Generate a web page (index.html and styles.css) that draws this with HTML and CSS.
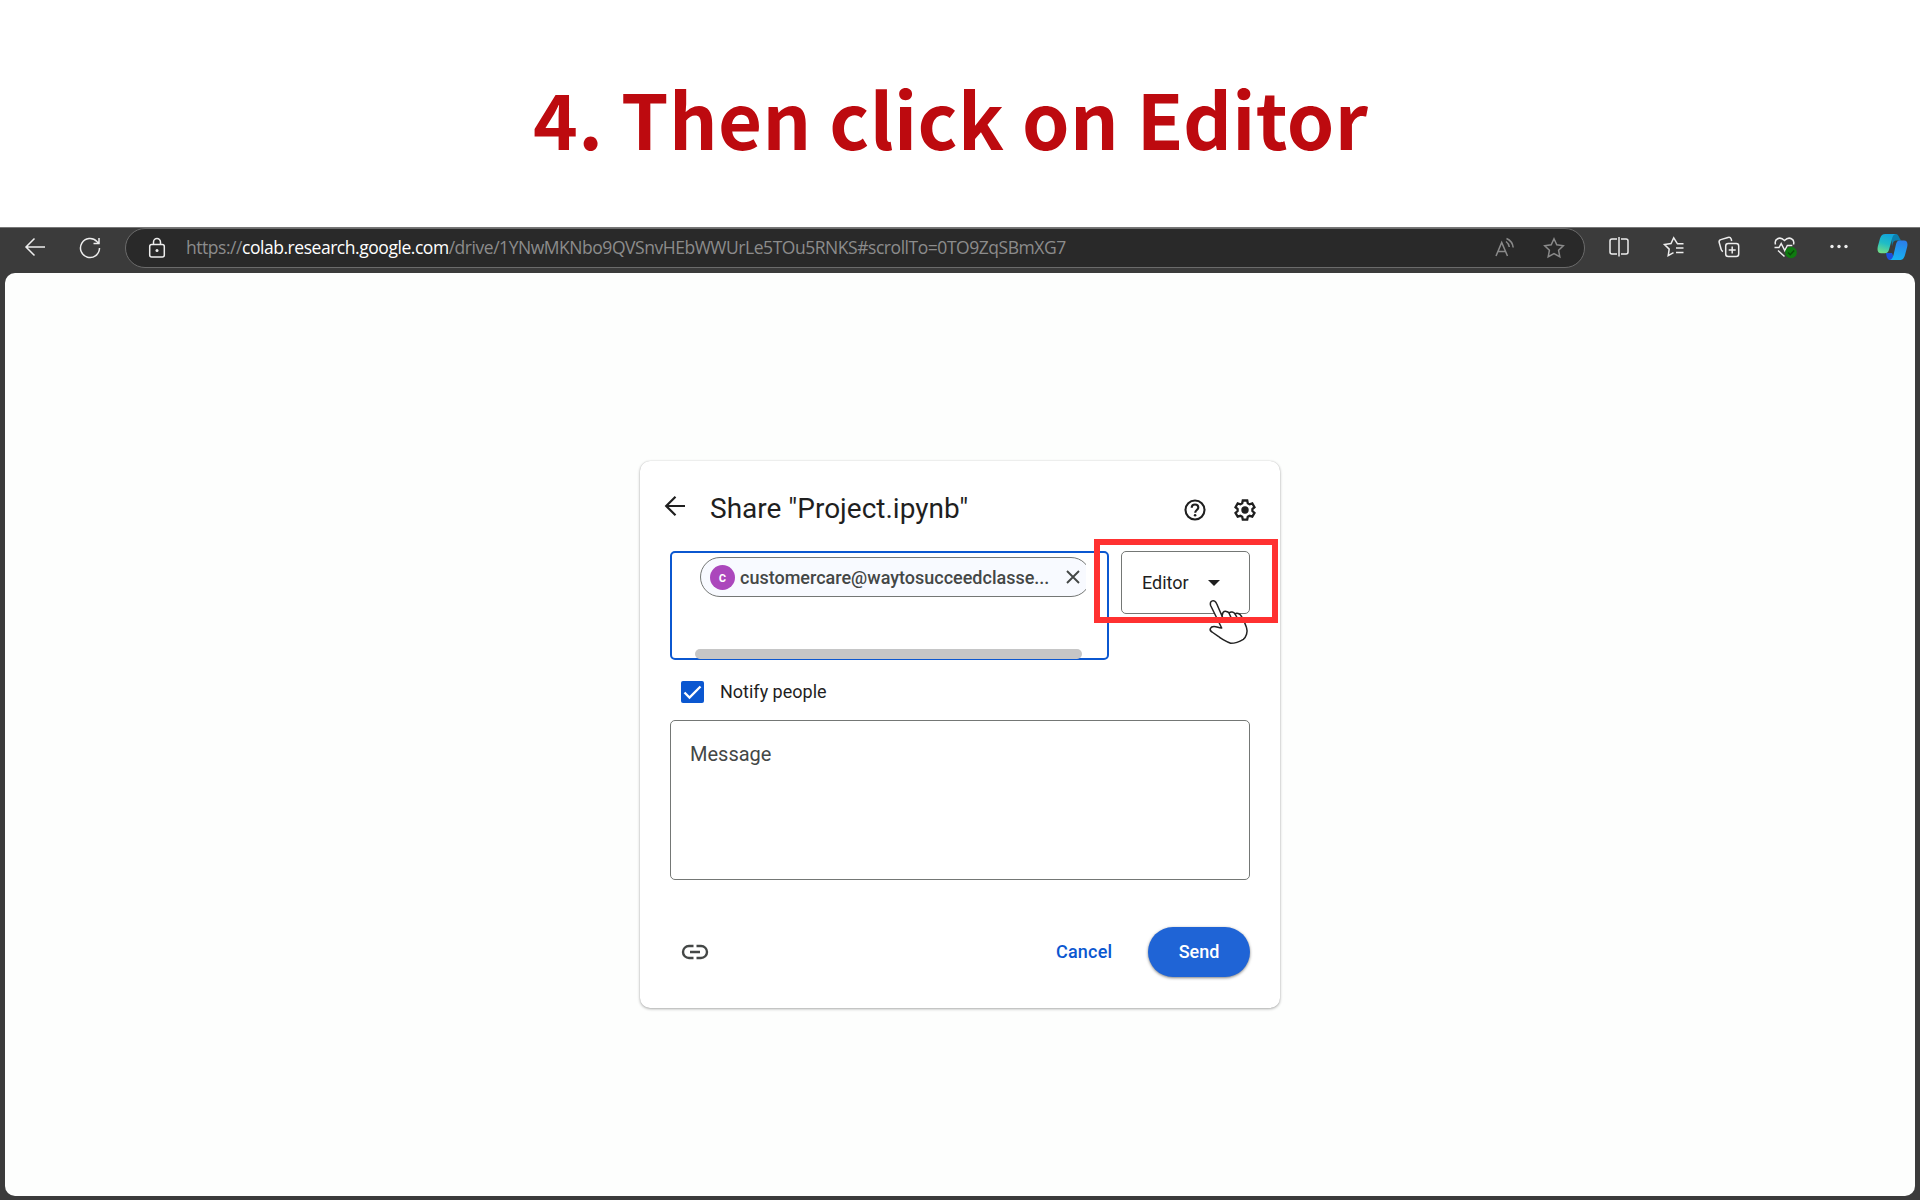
FILE: index.html
```html
<!DOCTYPE html>
<html lang="en">
<head>
<meta charset="utf-8">
<title>Then click on Editor</title>
<link rel="stylesheet" href="styles.css">
</head>
<body>
<header class="heading"><h1>4. Then click on Editor</h1></header>
<main class="browser">
  <nav class="toolbar">
    <svg class="nav-back" width="24" height="24" viewBox="0 0 24 24"><path d="M22 12H3M11.500 3.500 3 12l8.500 8.500"/></svg>
    <svg class="nav-reload" width="24" height="24" viewBox="0 0 24 24"><path d="M21.500 12a9.500 9.500 0 1 1-2.600-6.500L21 7.500M21 2v5.500h-5.500"/></svg>
    <div class="address">
      <svg class="lock" width="18" height="22" viewBox="0 0 18 22"><rect x="1.700" y="7.500" width="14.600" height="12.500" rx="2"/><path d="M5.500 7.500V5a3.500 3.500 0 0 1 7 0v2.500"/><circle class="fill" cx="9" cy="13.500" r="1.500"/></svg>
      <div class="url"><span class="scheme">https://</span><span class="host">colab.research.google.com</span><span class="path">/drive/1YNwMKNbo9QVSnvHEbWWUrLe5TOu5RNKS#scrollTo=0TO9ZqSBmXG7</span></div>
      <svg class="read" width="22" height="22" viewBox="0 0 22 22"><path d="M2 19 7.700 5.500 13.500 19M4 14.500h7.500M12 4.500c2 1.500 3 3.200 3.300 5.500M12.500 1.500c4 1.700 6.200 4.700 6.700 9"/></svg>
      <svg class="star" width="22" height="22" viewBox="0 0 22 22"><path d="m11 1.800 2.800 6 6.500.9-4.700 4.600 1.200 6.500-5.800-3.100-5.800 3.100 1.200-6.500-4.700-4.600 6.500-.9z"/></svg>
    </div>
    <div class="actions">
      <svg width="22" height="22" viewBox="0 0 22 22"><path d="M9 3H4a2 2 0 0 0-2 2v11a2 2 0 0 0 2 2h5M13 3h5a2 2 0 0 1 2 2v11a2 2 0 0 1-2 2h-5M11 1v19.500"/></svg>
      <svg width="22" height="22" viewBox="0 0 22 22"><path d="M20.500 7.800h-6L10.700 1.800 8 7.600l-6.500.9 4.700 4.600L5.200 19.600l5.300-2.900M13 12.100h7.500M13 16.400h7.500"/></svg>
      <svg width="22" height="22" viewBox="0 0 22 22"><rect x="7.700" y="7.500" width="13" height="13" rx="2.500"/><path d="M14.200 10.500v7M10.700 14h7M5 15.500c-1-.3-1.500-1-1.800-2L1.200 6.500c-.4-1.400.2-2.400 1.600-2.900L10 1.500c1.500-.4 2.600.1 3.200 1.500l.5 2"/></svg>
      <svg width="24" height="22" viewBox="0 0 24 22"><path d="M2.500 8.500C1 3.500 6.500-.5 11.500 4.500 16.500-.5 22 3.500 20.500 8.500M1.500 11.500H6l2.200-4 3.600 7 2.500-5h5M5 14.500l6.500 6"/><circle cx="18" cy="16.500" r="5.800" class="badge"/><path class="badge-tick" d="m15 16.500 2.200 2.200 4-4.300"/></svg>
      <svg class="dots" width="18" height="22" viewBox="0 0 18 22"><circle cx="2" cy="10.500" r="1.700"/><circle cx="9" cy="10.500" r="1.700"/><circle cx="16" cy="10.500" r="1.700"/></svg>
      <svg class="copilot" width="31" height="28" viewBox="0 0 31 28">
        <defs>
          <linearGradient id="leaf" x1=".6" y1="0" x2=".3" y2="1"><stop offset="0" stop-color="#12a4dc"/><stop offset=".5" stop-color="#20bdc5"/><stop offset="1" stop-color="#70dc87"/></linearGradient>
          <linearGradient id="wave" x1=".6" y1="0" x2=".4" y2="1"><stop offset="0" stop-color="#2b7eea"/><stop offset="1" stop-color="#16b4f2"/></linearGradient>
        </defs>
        <path fill="#0c7fae" d="M14 1h5c3 0 3.500 6.500 6 6.500h-6c-3 0-3.500 4-4 6z"/>
        <path fill="#1c50dc" d="M9 20h6l3 7h-5c-2.500 0-3.500-3-4-7z"/>
        <path fill="url(#leaf)" d="M8.500 1H19c-3 .5-3.500 3-4.300 6l-2.500 9c-.8 3-1.800 4.200-4.500 4.200H4C1 20.200 0 17.500.8 13.500L3 5.500C4 2.300 5.500 1 8.500 1z"/>
        <path fill="url(#wave)" d="M22.500 7.500h4.500c3 0 4 2.500 3.200 6.300L28 22c-1 3.700-2.700 5-5.500 5H12.500c2.500-.4 3.300-2.400 4-5l2.200-9.500c.8-3.500 1.500-5 3.800-5z"/>
      </svg>
    </div>
  </nav>
  <section class="page">
    <div class="dialog">
      <div class="title-row">
        <svg class="back" width="22" height="22" viewBox="0 0 22 22"><path d="M21 11H2.500M11.500 1.700 2.200 11l9.300 9.300"/></svg>
        <h2>Share "Project.ipynb"</h2>
        <svg class="help" width="22" height="22" viewBox="0 0 22 22"><circle cx="11" cy="11" r="9.500"/><path d="M7.700 8.700C7.700 6.600 9.200 5.500 11 5.500s3.300 1.200 3.300 3c0 2.400-3.100 2.700-3.100 5.300"/><circle class="fill" cx="11.100" cy="16.300" r="1.300"/></svg>
        <svg class="gear" width="24" height="24" viewBox="0 0 24 24"><path d="M9.800 2.500h4.400l.6 2.800 1.800 1 2.700-.9 2.200 3.800-2.100 1.900v1.900l2.100 1.900-2.200 3.800-2.700-.9-1.800 1-.6 2.800H9.800l-.6-2.800-1.800-1-2.700.9-2.200-3.800 2.100-1.900v-1.900L2.500 9.200l2.200-3.800 2.700.9 1.800-1z"/><circle class="fill" cx="12" cy="12" r="3.700"/></svg>
      </div>
      <div class="recipient-row">
        <div class="people">
          <div class="chip-clip"><div class="chip"><span class="avatar">c</span><span class="email">customercare@waytosucceedclasse...</span><svg class="close" width="14" height="14" viewBox="0 0 14 14"><path d="m1 1 12 12M13 1 1 13"/></svg></div></div>
          <div class="scrollbar"></div>
        </div>
        <div class="role"><span class="role-name">Editor</span><svg class="caret" width="14" height="8" viewBox="0 0 14 8"><path d="M1 1h12L7 7z"/></svg>
          <svg class="pointer" width="42" height="48" viewBox="0 0 42 48"><path class="hand" d="M13.700 30 2.600 7.500C1.300 3 6.500.2 8.700 5.700L14 18l1-3.500c1.500-1.800 5-1.300 6 .5 1.800-1.700 4.800-1.200 6 .8 1.700-1 4.800-.5 6.200 2.200 2.500 4 4.300 8 5.300 11.500 1.500 4.500-.3 9.500-3.200 11.800-4 2.500-7 4-12.600 4C18.500 44 12 40 10.300 38.300L4 34c-3.500-2-1.500-5.500 2-5.500 3 0 5 1.700 7.700 1.500z"/><path d="m14 18 1.500 3.500M21 15l2 4.500M27 15.800l2 3.700"/></svg>
          <div class="highlight"></div>
        </div>
      </div>
      <label class="notify"><span class="checkbox"><svg width="23" height="22" viewBox="0 0 23 22"><path d="m3.500 11.500 5 5L19.500 5.500"/></svg></span><span class="notify-text">Notify people</span></label>
      <div class="message"><span>Message</span></div>
      <footer class="footer">
        <svg class="link" width="26" height="16" viewBox="0 0 26 16"><path d="M11.500 2H7a6 6 0 0 0 0 12h4.500M14.500 2H19a6 6 0 0 1 0 12h-4.500M8 8h10"/></svg>
        <span class="cancel">Cancel</span>
        <span class="send">Send</span>
      </footer>
    </div>
  </section>
</main>
</body>
</html>
```
FILE: styles.css
```css
* { box-sizing: border-box; }
body { margin: 0; width: 1920px; height: 1200px; overflow: hidden; background: #fff; font-family: Roboto, sans-serif; color: #1f1f1f; }
svg { display: block; flex: none; fill: none; stroke: currentColor; overflow: visible; }
svg .fill { fill: currentColor; stroke: none; }
.heading { height: 227px; padding-top: 62px; padding-left: 533px; }
h1 { margin: 0; font: 700 76px/110px "Noto Sans CJK SC", sans-serif; letter-spacing: .4px; color: #bd0a0f; white-space: nowrap; }
.browser { height: 973px; background: #3b3b3b; border-top: 1px solid #777; padding: 0 5px 4px; }
.toolbar { height: 45px; display: flex; align-items: flex-start; color: #ededed; stroke-width: 1.5; }
.nav-back { margin: 7px 0 0 18px; }
.nav-reload { margin: 8px 0 0 31px; }
.address { width: 1460px; height: 40px; margin-left: 23px; border: 1px solid #6b6b6b; border-radius: 20px; background: #292929; display: flex; align-items: center; }
.lock { margin-left: 22px; }
.url { width: 1308px; margin-left: 20px; padding-bottom: 1px; font: 17.500px/37px "Open Sans", sans-serif; letter-spacing: -.46px; white-space: nowrap; color: #8c8c8c; }
.host { color: #fff; }
.read, .star { color: #8a8a8a; }
.star { margin-left: 27px; }
.actions { display: flex; margin: 8px 0 0 23px; gap: 33px; }
.actions .dots { fill: currentColor; stroke: none; }
.badge { fill: #0f7b10; stroke: none; }
.badge-tick { stroke: #0a4a0a; }
.copilot { stroke: none; margin: -3px 0 0 -4px; }
.page { height: 923px; background: #fdfefd; border-radius: 10px; padding: 188px 0 0 635px; }
.dialog { width: 640px; height: 547px; border-radius: 10px; background: #fff; box-shadow: 0 1px 3px rgba(0,0,0,.32), 0 0 1px rgba(0,0,0,.2); padding: 0 30px; }
.title-row { height: 90px; display: flex; align-items: flex-start; padding-top: 34px; }
.back { margin: 0 0 0 -6px; stroke-width: 2.200; }
h2 { flex: none; width: 450px; margin: -3px 0 0 24px; font: 400 28px/34px Roboto, sans-serif; white-space: nowrap; }
.help { margin: 4px 0 0 24px; stroke-width: 2.100; }
.gear { margin: 3px 0 0 27px; stroke-width: 2.300; }
.recipient-row { display: flex; gap: 12px; height: 109px; }
.people { width: 439px; height: 109px; border: 2px solid #0b57d0; border-radius: 5px; padding: 4px 21px 0 28px; display: flex; flex-direction: column; justify-content: space-between; }
.chip-clip { overflow: hidden; }
.chip { width: 391px; height: 40px; border: 1px solid #747775; border-radius: 20px; background: #f8faff; display: flex; align-items: center; padding-left: 9px; }
.avatar { width: 25px; height: 25px; border-radius: 50%; background: #ab47bc; color: #fff; font: 500 14px/24px Roboto, sans-serif; text-align: center; }
.email { width: 326px; margin-left: 5px; padding-top: 1px; font: 500 18px/24px Roboto, sans-serif; color: #444746; white-space: nowrap; }
.close { color: #444746; stroke-width: 1.900; }
.scrollbar { width: 387px; height: 10px; margin-left: -5px; margin-bottom: -1px; border-radius: 5px; background: #c6c6c6; }
.role { position: relative; width: 129px; height: 63px; border: 1px solid #747775; border-radius: 5px; display: flex; align-items: center; padding-left: 20px; }
.role-name { width: 65px; font-size: 18px; }
.caret { fill: #1f1f1f; stroke: none; }
.highlight { position: absolute; left: -28px; top: -13px; width: 184px; height: 84px; border: 6px solid #ff3131; }
.pointer { position: absolute; left: 86px; top: 46px; stroke: #222; stroke-width: 1.500; stroke-linejoin: round; }
.hand { fill: #fff; }
.notify { display: flex; align-items: center; height: 60px; padding: 4px 0 0 11px; }
.checkbox { width: 23px; height: 22px; border-radius: 2px; background: #0b57d0; color: #fff; }
.checkbox svg { stroke-width: 2.300; }
.notify-text { margin-left: 16px; padding-bottom: 2px; font-size: 18px; }
.message { height: 160px; border: 1px solid #747775; border-radius: 5px; padding: 20px 19px; font-size: 20px; line-height: 26px; color: #444746; }
.footer { display: flex; align-items: center; height: 50px; margin-top: 47px; }
.link { margin-left: 12px; color: #444746; stroke-width: 2.400; }
.cancel { width: 92px; margin-left: 348px; padding-bottom: 2px; font-weight: 500; font-size: 18px; letter-spacing: .2px; color: #0b57d0; }
.send { width: 102px; height: 50px; border-radius: 25px; background: #1f64d6; color: #fff; font: 500 18px/49px Roboto, sans-serif; text-align: center; box-shadow: 0 1px 3px rgba(0,0,0,.5); }
```
